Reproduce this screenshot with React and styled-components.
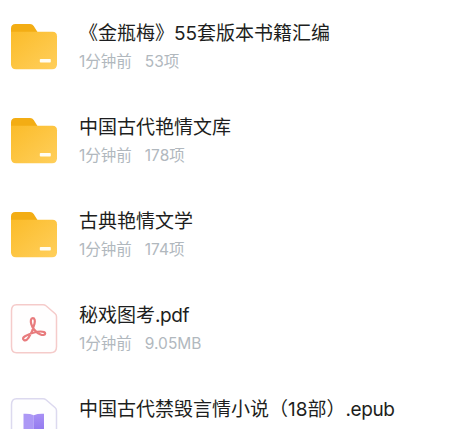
import styled, { createGlobalStyle } from "styled-components";

const files = [
  { type: "folder", name: "《金瓶梅》55套版本书籍汇编", time: "1分钟前", info: "53项" },
  { type: "folder", name: "中国古代艳情文库", time: "1分钟前", info: "178项" },
  { type: "folder", name: "古典艳情文学", time: "1分钟前", info: "174项" },
  { type: "pdf", name: "秘戏图考", ext: ".pdf", time: "1分钟前", info: "9.05MB" },
  { type: "epub", name: "中国古代禁毁言情小说（18部）", ext: ".epub" },
];

export default function App() {
  return (
    <>
      <GlobalStyle />
      <StyledList>
        {files.map((file) => (
          <StyledRow key={file.name}>
            <FileIcon type={file.type} />
            <StyledText>
              <StyledName>
                {file.name}
                {file.ext && <StyledExtension>{file.ext}</StyledExtension>}
              </StyledName>
              <StyledInfo>
                {file.time && <span>{file.time}</span>}
                {file.info && <span>{file.info}</span>}
              </StyledInfo>
            </StyledText>
          </StyledRow>
        ))}
      </StyledList>
    </>
  );
}

function FileIcon({ type }) {
  if (type === "folder") {
    return (
      <StyledIcon viewBox="0 0 48 52">
        <defs>
          <linearGradient id="folder" x1="0" y1="0" x2="1" y2="1">
            <stop offset="0" stopColor="#fbbc2a" />
            <stop offset="1" stopColor="#ffcf5c" />
          </linearGradient>
        </defs>
        <path d="M1 19V7.500q0-4.500 4.500-4.500h14.500q2.500 0 3.700 2l4.100 6.500L36 19z" fill="#f3ad14" />
        <path
          d="M1 10.800h41.500q4.500 0 4.500 4.500v28q0 5-5 5H6q-5 0-5-5z"
          fill="url(#folder)"
        />
        <rect x="29.800" y="38" width="11" height="3.600" rx="0.800" fill="#fffdf4" />
      </StyledIcon>
    );
  }

  if (type === "pdf") {
    return (
      <StyledIcon viewBox="0 0 48 52">
        <path
          d="M6.500 1.700H33q1.800 0 3 1.100l9.200 8q1.300 1.100 1.300 3v30q0 6-6 6h-34q-5 0-5-6v-36q0-6.100 5-6.100z"
          fill="#fffefe"
          stroke="#f5cbca"
          strokeWidth="1.500"
        />
        <path
          d="M14.200 37.200c-1.900-.9-1.400-2.800.8-4 5.500-2.900 10.500-4.700 15.500-4.700 3 0 4.800.7 4.700 2.200-.1 1.400-2.400 1.700-4.700.7-4.500-2-7.800-5.600-9.200-10.300-.9-3.200-.6-5.900 1.500-5.900 2 0 2.400 2.500 1.700 5.500-1.300 5.300-3.300 10.200-5.900 14-1.400 2.100-3 3.200-4.400 2.500z"
          fill="none"
          stroke="#e87b7d"
          strokeWidth="2.200"
          strokeLinejoin="round"
        />
      </StyledIcon>
    );
  }

  return (
    <StyledIcon viewBox="0 0 48 52">
      <defs>
        <linearGradient id="page" x1="0" y1="0" x2="0" y2="1">
          <stop offset="0" stopColor="#a890f5" />
          <stop offset="1" stopColor="#8f76ee" />
        </linearGradient>
      </defs>
      <path
        d="M6.500 1.700H33q1.800 0 3 1.100l9.200 8q1.300 1.100 1.300 3v30q0 6-6 6h-34q-5 0-5-6v-36q0-6.100 5-6.100z"
        fill="#fefeff"
        stroke="#dcd9ef"
        strokeWidth="1.500"
      />
      <path d="M13.500 16.800q6-.4 10.300 1.400v18q-4.300-2-10.300-1.700z" fill="#ac98f5" />
      <path d="M34 16.800q-6-.4-10.200 1.400v18q4.200-2 10.200-1.700z" fill="url(#page)" />
    </StyledIcon>
  );
}

const GlobalStyle = createGlobalStyle`
  body {
    margin: 0;
    background-color: #fff;
  }
`;

const StyledList = styled.div`
  font-family: Inter, "Noto Sans CJK SC", sans-serif;
  width: 468px;
  height: 429px;
  overflow: hidden;
`;

const StyledRow = styled.div`
  height: 94px;
  padding-left: 10px;
  display: flex;
  align-items: center;
`;

const StyledIcon = styled.svg`
  width: 48px;
  height: 52px;
  flex-shrink: 0;
`;

const StyledText = styled.div`
  margin-left: 21px;
  padding-top: 2px;
  white-space: nowrap;
`;

const StyledName = styled.div`
  color: #1d1e20;
  font-size: 19px;
  line-height: 28px;
`;

const StyledExtension = styled.span`
  letter-spacing: -0.4px;
`;

const StyledInfo = styled.div`
  color: #b1b8be;
  font-size: 15.5px;
  line-height: 28px;
  min-height: 28px;
  display: flex;
  gap: 13px;
`;
